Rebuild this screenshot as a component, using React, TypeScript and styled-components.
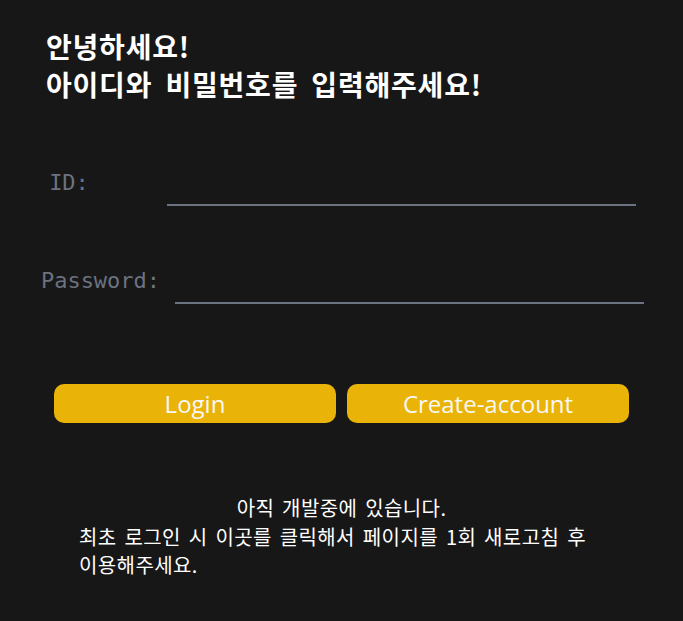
import React from "react";
import styled, { createGlobalStyle } from "styled-components";

const GlobalStyle = createGlobalStyle`
  html, body {
    margin: 0;
    padding: 0;
    background: #171717;
  }
  body {
    font-family: "Noto Sans CJK KR", "Noto Sans", sans-serif;
    color: #ffffff;
  }
  * { box-sizing: border-box; }
`;

const Page = styled.main`
  min-height: 621px;
  background: #171717;
  padding-top: 27px;
  display: flex;
  flex-direction: column;
`;

const Heading = styled.h1`
  margin: 0;
  padding-left: 46px;
  font-family: "Noto Sans CJK KR", sans-serif;
  font-size: 28px;
  font-weight: 700;
  line-height: 38px;
  letter-spacing: 0.8px;
  word-spacing: 6px;
  color: #ffffff;
`;

const Form = styled.form`
  margin-top: 67px;
  padding-left: 2px;
  display: flex;
  flex-direction: column;
  gap: 62px;
`;

const FieldRow = styled.div`
  display: flex;
  justify-content: center;
  align-items: flex-end;
  height: 36px;
`;

const Label = styled.label<{ $gap: number }>`
  font-family: "DejaVu Sans Mono", "Liberation Mono", monospace;
  font-size: 22px;
  line-height: 26px;
  color: #6b7280;
  margin-bottom: 10px;
  margin-right: ${(p) => p.$gap}px;
  white-space: nowrap;
`;

const Input = styled.input`
  width: 469px;
  height: 36px;
  background: transparent;
  border: none;
  border-bottom: 2px solid #6b7280;
  outline: none;
  color: #ffffff;
  font-family: "DejaVu Sans Mono", monospace;
  font-size: 20px;
  padding: 0 4px;
`;

const ButtonRow = styled.div`
  margin-top: 80px;
  display: flex;
  justify-content: center;
  gap: 11px;
`;

const Button = styled.button`
  width: 282px;
  height: 39px;
  border: none;
  border-radius: 10px;
  background: #eab308;
  color: #f7f7f7;
  font-family: "Open Sans", "Noto Sans", sans-serif;
  font-size: 24px;
  font-weight: 400;
  line-height: 39px;
  padding: 0;
  cursor: pointer;
`;

const Notice = styled.div`
  margin: 71px 79px 0;
  font-family: "Noto Sans CJK KR", sans-serif;
  font-size: 20px;
  line-height: 28.5px;
  letter-spacing: 0.4px;
  word-spacing: 3px;
  color: #ffffff;
`;

const NoticeTitle = styled.p`
  margin: 0;
  text-align: center;
`;

const RefreshLink = styled.p`
  margin: 0;
  text-align: left;
  cursor: pointer;
`;

export default function App() {
  return (
    <>
      <GlobalStyle />
      <Page>
        <Heading>
          안녕하세요!
          <br />
          아이디와 비밀번호를 입력해주세요!
        </Heading>
        <Form onSubmit={(e) => e.preventDefault()}>
          <FieldRow>
            <Label $gap={78} htmlFor="id">ID:</Label>
            <Input id="id" type="text" />
          </FieldRow>
          <FieldRow>
            <Label $gap={15} htmlFor="pw">Password:</Label>
            <Input id="pw" type="password" />
          </FieldRow>
        </Form>
        <ButtonRow>
          <Button type="button">Login</Button>
          <Button type="button">Create-account</Button>
        </ButtonRow>
        <Notice>
          <NoticeTitle>아직 개발중에 있습니다.</NoticeTitle>
          <RefreshLink>
            최초 로그인 시 이곳를 클릭해서 페이지를 1회 새로고침 후 이용해주세요.
          </RefreshLink>
        </Notice>
      </Page>
    </>
  );
}
